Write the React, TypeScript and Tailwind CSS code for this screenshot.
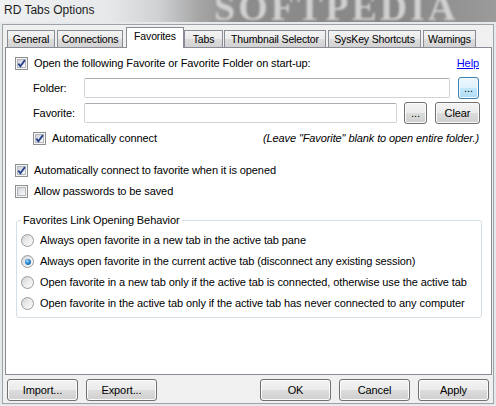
import React from "react";

function Check({ checked }: { checked: boolean }) {
  return (
    <span className="relative block h-[13px] w-[13px] shrink-0 border border-[#8e8f8f] bg-[#f6f6f6]">
      <span className="absolute inset-[1px] border border-[#b4b8be] bg-[linear-gradient(135deg,#cdd1d6_0%,#e9ebee_60%,#fbfbfb_100%)]" />
      {checked && (
        <svg className="absolute left-0 top-0" width="11" height="11" viewBox="0 0 11 11">
          <path d="M2.3 5.6 L4.4 8.2 L8.9 2.1" fill="none" stroke="#27408b" strokeWidth="1.8" />
        </svg>
      )}
    </span>
  );
}

function Radio({ on }: { on?: boolean }) {
  return (
    <span className="relative block h-[13px] w-[13px] shrink-0 rounded-full border border-[#9a9a9a] bg-[linear-gradient(135deg,#d2d2d2_0%,#ececec_50%,#fafafa_100%)]">
      {on && (
        <span className="absolute left-[2.5px] top-[2.5px] h-[6px] w-[6px] rounded-full bg-[radial-gradient(circle_at_40%_35%,#a6e0ff_0%,#2a86cf_45%,#0f4f8c_100%)]" />
      )}
    </span>
  );
}

function Btn({ className, children, focus }: { className: string; children: React.ReactNode; focus?: boolean }) {
  return (
    <div
      className={
        "flex h-[22px] shrink-0 items-center justify-center rounded-[3px] border leading-none " +
        (focus
          ? "border-[#3c7fb1] bg-[linear-gradient(to_bottom,#edf7fd_0%,#def2fc_50%,#c4e7fb_50%,#b0dcf4_100%)] shadow-[inset_0_0_0_1px_#f3fbff] "
          : "border-[#707070] bg-[linear-gradient(to_bottom,#f3f3f3_0%,#ebebeb_50%,#dddddd_50%,#cfcfcf_100%)] shadow-[inset_0_0_0_1px_#fbfbfb] ") +
        className
      }
    >
      {children}
    </div>
  );
}

function Tab({ className, children, selected }: { className: string; children: React.ReactNode; selected?: boolean }) {
  return (
    <div
      className={
        "flex shrink-0 items-center justify-center whitespace-nowrap border border-b-0 border-[#898c95] text-[10.5px] tracking-[-0.15px] " +
        (selected
          ? "h-[21px] bg-white pb-[3px] "
          : "mb-[1px] h-[17px] bg-[linear-gradient(to_bottom,#f3f3f3_0%,#ebebeb_50%,#dddddd_50%,#d2d2d2_100%)] pt-[1px] ") +
        className
      }
    >
      {children}
    </div>
  );
}

export default function App() {
  return (
    <div className="relative h-[406px] w-[496px] overflow-hidden bg-[#e6e9ec] font-['Liberation_Sans',Arial,sans-serif] text-[11px] tracking-[-0.1px] text-black">
      {/* Title bar */}
      <div className="relative h-[22px] overflow-hidden bg-[linear-gradient(to_right,#eef0f2_0%,#e6e8ea_22%,#cfd1d3_32%,#a6a6a6_40%,#8c8c8c_48%,#878787_80%,#9b9b9b_100%)]">
        <div aria-hidden="true" className="absolute left-[214px] top-0 h-[22px] w-[260px] overflow-hidden">
          <span className="block select-none whitespace-nowrap font-['Liberation_Serif',serif] text-[38px] font-bold leading-[14px] tracking-[3px] text-[#d0d0d0] blur-[1.2px]">
            SOFTPEDIA
          </span>
        </div>
        <span className="relative block pl-[4px] pt-[2px] text-[12px] leading-[16px] tracking-normal text-[#1c1c1c]">
          RD Tabs Options
        </span>
      </div>

      {/* Dialog body */}
      <div className="ml-[2px] mt-[2px] h-[380px] w-[492px] border border-[#9ea3a8] bg-[#f0f0f0] pl-[2px]">
        {/* Tabs */}
        <div className="relative z-10 mt-[2px] flex h-[21px] items-end">
          <Tab className="ml-[2px] w-[48px]">General</Tab>
          <Tab className="ml-[2px] w-[66px]">Connections</Tab>
          <Tab className="ml-[3px] w-[58px]" selected>
            Favorites
          </Tab>
          <Tab className="w-[39px]">Tabs</Tab>
          <Tab className="ml-[1px] w-[102px]">Thumbnail Selector</Tab>
          <Tab className="ml-[2px] w-[93px]">SysKey Shortcuts</Tab>
          <Tab className="ml-[2px] w-[53px]">Warnings</Tab>
        </div>

        {/* Panel */}
        <div className="relative -mt-px h-[328px] w-[487px] border border-[#898c95] bg-white">
          <div className="mt-[6px] flex h-[18px] items-center pl-[9px] pr-[12px]">
            <Check checked />
            <span className="ml-[6px]">Open the following Favorite or Favorite Folder on start-up:</span>
            <span className="ml-auto text-[#0000ff] underline">Help</span>
          </div>

          <div className="mt-[6px] flex h-[20px] items-center pl-[27px]">
            <span className="w-[51px] shrink-0">Folder:</span>
            <div className="h-[20px] w-[366px] rounded-[2px] border border-[#cfd3d8] border-t-[#abadb3] bg-white" />
            <Btn className="ml-[8px] w-[21px]" focus>
              ...
            </Btn>
          </div>

          <div className="mt-[5px] flex h-[20px] items-center pl-[27px]">
            <span className="w-[51px] shrink-0">Favorite:</span>
            <div className="h-[20px] w-[313px] rounded-[2px] border border-[#cfd3d8] border-t-[#abadb3] bg-white" />
            <Btn className="ml-[7px] w-[23px]">...</Btn>
            <Btn className="ml-[8px] w-[45px]">Clear</Btn>
          </div>

          <div className="mt-[6px] flex h-[18px] items-center pl-[27px] pr-[12px]">
            <Check checked />
            <span className="ml-[6px]">Automatically connect</span>
            <span className="ml-auto italic">(Leave "Favorite" blank to open entire folder.)</span>
          </div>

          <div className="mt-[14px] flex h-[18px] items-center pl-[9px]">
            <Check checked />
            <span className="ml-[6px]">Automatically connect to favorite when it is opened</span>
          </div>

          <div className="mt-[3px] flex h-[18px] items-center pl-[9px]">
            <Check checked={false} />
            <span className="ml-[6px]">Allow passwords to be saved</span>
          </div>

          <fieldset className="ml-[10px] mt-[13px] w-[466px] rounded-[3px] border border-[#d5dfe5] px-[4px] pb-[3px] pt-[3px]">
            <legend className="px-[2px] leading-[14px]">Favorites Link Opening Behavior</legend>
            <div className="flex h-[21px] items-center">
              <Radio />
              <span className="ml-[6px]">Always open favorite in a new tab in the active tab pane</span>
            </div>
            <div className="flex h-[21px] items-center">
              <Radio on />
              <span className="ml-[6px]">Always open favorite in the current active tab (disconnect any existing session)</span>
            </div>
            <div className="flex h-[21px] items-center">
              <Radio />
              <span className="ml-[6px]">
                Open favorite in a new tab only if the active tab is connected, otherwise use the active tab
              </span>
            </div>
            <div className="flex h-[21px] items-center">
              <Radio />
              <span className="ml-[6px]">
                Open favorite in the active tab only if the active tab has never connected to any computer
              </span>
            </div>
          </fieldset>
        </div>

        {/* Bottom buttons */}
        <div className="mt-[4px] flex h-[22px]">
          <Btn className="ml-[2px] w-[71px]">Import...</Btn>
          <Btn className="ml-[8px] w-[71px]">Export...</Btn>
          <Btn className="ml-[103px] w-[71px]">OK</Btn>
          <Btn className="ml-[8px] w-[71px]">Cancel</Btn>
          <Btn className="ml-[8px] w-[71px]">Apply</Btn>
        </div>
      </div>
    </div>
  );
}
